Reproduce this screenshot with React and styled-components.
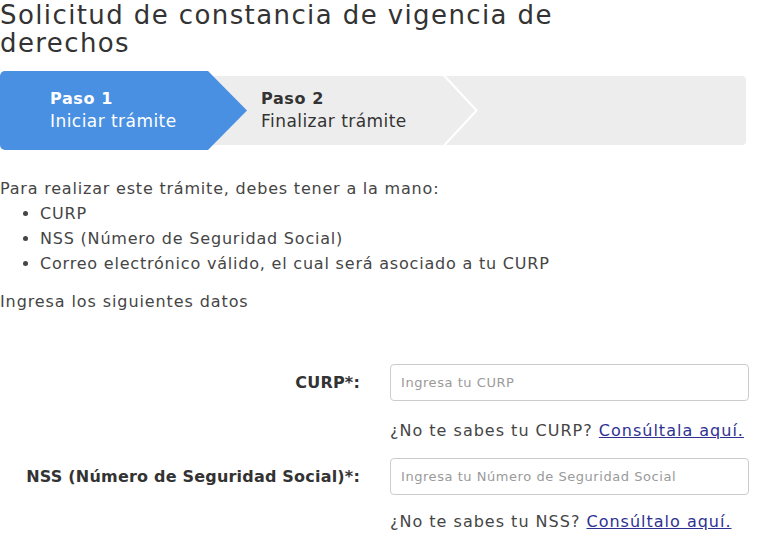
import React from "react";
import styled, { createGlobalStyle } from "styled-components";

const GlobalStyle = createGlobalStyle`
  body {
    margin: 0;
    background: #ffffff;
    font-family: "DejaVu Sans", "Open Sans", sans-serif;
    color: #454545;
  }
`;

const Page = styled.div`
  width: 767px;
`;

const Title = styled.h1`
  margin: 0;
  padding-top: 1px;
  font-size: 26px;
  line-height: 28px;
  font-weight: 500;
  letter-spacing: 1.4px;
  color: #333333;
  width: 600px;
`;

const Stepper = styled.div`
  margin-top: 14px;
  height: 79px;
  width: 746px;
  display: flex;
  align-items: center;
`;

const ActiveStep = styled.div`
  position: relative;
  z-index: 2;
  flex: none;
  width: 247px;
  height: 79px;
  box-sizing: border-box;
  padding-left: 50px;
  background: #4a90e2;
  color: #ffffff;
  border-radius: 5px 0 0 5px;
  clip-path: polygon(0 0, 208px 0, 247px 50%, 208px 100%, 0 100%);
  display: flex;
  flex-direction: column;
  justify-content: center;
`;

const NextStep = styled.div`
  position: relative;
  z-index: 1;
  flex: none;
  margin-left: -40px;
  width: 268px;
  height: 69px;
  box-sizing: border-box;
  padding-left: 54px;
  background: #ededed;
  color: #333333;
  clip-path: polygon(0 0, 236px 0, 268px 50%, 236px 100%, 0 100%);
  display: flex;
  flex-direction: column;
  justify-content: center;
`;

const RestStep = styled.div`
  flex: 1;
  margin-left: -29px;
  height: 69px;
  background: #ededed;
  border-radius: 0 4px 4px 0;
  clip-path: polygon(0 0, 100% 0, 100% 100%, 0 100%, 32px 50%);
`;

const StepNum = styled.div`
  font-size: 16px;
  font-weight: 700;
  line-height: 22px;
  letter-spacing: 0.6px;
`;

const StepName = styled.div`
  font-size: 17px;
  line-height: 23px;
  letter-spacing: 0.45px;
`;

const Intro = styled.p`
  margin: 26px 0 0;
  font-size: 16px;
  line-height: 25px;
  letter-spacing: 0.8px;
`;

const List = styled.ul`
  margin: 0;
  padding-left: 40px;
  font-size: 16px;
  line-height: 25px;
  letter-spacing: 0.8px;
`;

const Note = styled.p`
  margin: 13px 0 0;
  font-size: 16px;
  line-height: 25px;
  letter-spacing: 0.9px;
`;

const Form = styled.div`
  margin-top: 50px;
  display: grid;
  grid-template-columns: 360px 359px;
  column-gap: 30px;
  align-items: center;
`;

const Label = styled.label`
  text-align: right;
  font-size: 16px;
  font-weight: 700;
  letter-spacing: 0.2px;
  color: #333333;
`;

const Input = styled.input`
  height: 37px;
  box-sizing: border-box;
  border: 1px solid #cccccc;
  border-radius: 4px;
  padding: 0 10px;
  font-family: inherit;
  font-size: 13px;
  letter-spacing: 0.55px;
  color: #444444;
  &::placeholder {
    color: #9a9a9a;
  }
`;

const Help = styled.div`
  grid-column: 2;
  font-size: 16px;
  line-height: 22px;
  letter-spacing: 1px;
  margin: ${(p) => (p.$last ? "16px 0 0" : "19px 0 16px")};
  a {
    color: #2e3192;
  }
`;

const fields = [
  {
    label: "CURP*:",
    placeholder: "Ingresa tu CURP",
    help: "¿No te sabes tu CURP?",
    link: "Consúltala aquí.",
  },
  {
    label: "NSS (Número de Seguridad Social)*:",
    placeholder: "Ingresa tu Número de Seguridad Social",
    help: "¿No te sabes tu NSS?",
    link: "Consúltalo aquí.",
  },
];

export default function App() {
  return (
    <>
      <GlobalStyle />
      <Page>
        <Title>Solicitud de constancia de vigencia de derechos</Title>
        <Stepper>
          <ActiveStep>
            <StepNum>Paso 1</StepNum>
            <StepName>Iniciar trámite</StepName>
          </ActiveStep>
          <NextStep>
            <StepNum>Paso 2</StepNum>
            <StepName>Finalizar trámite</StepName>
          </NextStep>
          <RestStep />
        </Stepper>
        <Intro>Para realizar este trámite, debes tener a la mano:</Intro>
        <List>
          <li>CURP</li>
          <li>NSS (Número de Seguridad Social)</li>
          <li>Correo electrónico válido, el cual será asociado a tu CURP</li>
        </List>
        <Note>Ingresa los siguientes datos</Note>
        <Form>
          {fields.map((f, i) => (
            <React.Fragment key={f.label}>
              <Label>{f.label}</Label>
              <Input placeholder={f.placeholder} />
              <Help $last={i === fields.length - 1}>
                {f.help} <a href="#">{f.link}</a>
              </Help>
            </React.Fragment>
          ))}
        </Form>
      </Page>
    </>
  );
}
